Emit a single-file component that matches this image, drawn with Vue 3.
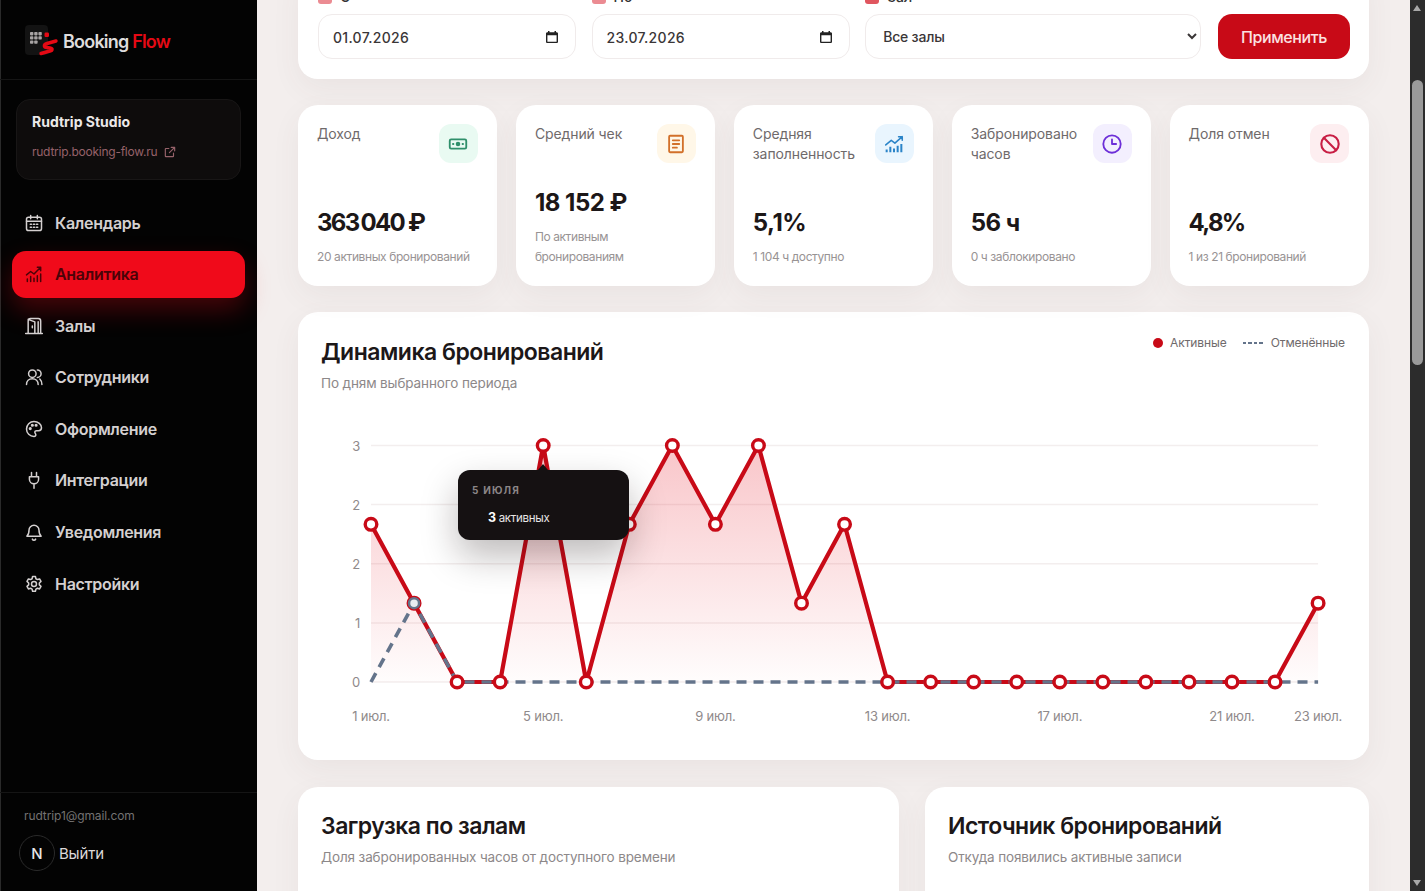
<script setup>
const navItems = [
  { label: 'Календарь', icon: 'calendar' },
  { label: 'Аналитика', icon: 'chart', active: true },
  { label: 'Залы', icon: 'door' },
  { label: 'Сотрудники', icon: 'users' },
  { label: 'Оформление', icon: 'palette' },
  { label: 'Интеграции', icon: 'plug' },
  { label: 'Уведомления', icon: 'bell' },
  { label: 'Настройки', icon: 'gear' },
]

const kpis = [
  { label: 'Доход', value: '363\u2009040 ₽', sub: '20 активных бронирований', icon: 'money', tone: 'green', tight: true },
  { label: 'Средний чек', value: '18 152 ₽', sub: 'По активным бронированиям', icon: 'receipt', tone: 'orange' },
  { label: 'Средняя заполненность', value: '5,1%', sub: '1 104 ч доступно', icon: 'growth', tone: 'blue' },
  { label: 'Забронировано часов', value: '56 ч', sub: '0 ч заблокировано', icon: 'clock', tone: 'violet' },
  { label: 'Доля отмен', value: '4,8%', sub: '1 из 21 бронирований', icon: 'ban', tone: 'rose', tight: true },
]

// значения по дням периода 1-23 июля
const active = [2, 1, 0, 0, 3, 0, 2, 3, 2, 3, 1, 2, 0, 0, 0, 0, 0, 0, 0, 0, 0, 0, 1]
const cancelled = [0, 1, 0, 0, 0, 0, 0, 0, 0, 0, 0, 0, 0, 0, 0, 0, 0, 0, 0, 0, 0, 0, 0]

const x0 = 50
const xStep = 43.05
const yTop = 20.5
const yBottom = 257
const px = (i) => x0 + i * xStep
const py = (v) => yBottom - (v / 3) * (yBottom - yTop)

const points = (arr) => arr.map((v, i) => `${px(i).toFixed(1)},${py(v).toFixed(1)}`).join(' ')
const activeLine = points(active)
const cancelledLine = points(cancelled)
const areaPath = `${px(0)},${yBottom} ${activeLine} ${px(22)},${yBottom}`

const yTicks = [
  { label: '3', y: yTop },
  { label: '2', y: yTop + 59.1 },
  { label: '2', y: yTop + 118.2 },
  { label: '1', y: yTop + 177.4 },
  { label: '0', y: yBottom },
]
const xTicks = [
  { label: '1 июл.', i: 0 },
  { label: '5 июл.', i: 4 },
  { label: '9 июл.', i: 8 },
  { label: '13 июл.', i: 12 },
  { label: '17 июл.', i: 16 },
  { label: '21 июл.', i: 20 },
  { label: '23 июл.', i: 22 },
]
</script>

<template>
  <div class="app">
    <aside class="sidebar">
      <div class="brand">
        <svg class="brand-mark" width="36" height="34" viewBox="0 0 36 34">
          <rect x="1" y="2" width="23" height="30" rx="4" fill="#131313" />
          <g fill="#a8a4a4">
            <rect x="6" y="9" width="3.400" height="3.400" rx="0.800" />
            <rect x="10.200" y="9" width="3.400" height="3.400" rx="0.800" />
            <rect x="14.400" y="9" width="3.400" height="3.400" rx="0.800" />
            <rect x="6" y="13.200" width="3.400" height="3.400" rx="0.800" />
            <rect x="10.200" y="13.200" width="3.400" height="3.400" rx="0.800" />
            <rect x="14.400" y="13.200" width="3.400" height="3.400" rx="0.800" />
            <rect x="6" y="17.400" width="3.400" height="3.400" rx="0.800" />
            <rect x="10.200" y="17.400" width="3.400" height="3.400" rx="0.800" />
          </g>
          <rect x="20.500" y="9.500" width="4.500" height="4.500" rx="1.200" fill="#e50914" />
          <path d="M32 18l-9 2.500c-4 1.200-3 3.800 0 4l3 .5c3 .5 2.500 2.500 0 3l-9 2.500" fill="none" stroke="#e50914" stroke-width="3.400" stroke-linecap="round" stroke-linejoin="round" />
        </svg>
        <span class="brand-name">Booking <em>Flow</em></span>
      </div>

      <div class="studio">
        <div class="studio-name">Rudtrip Studio</div>
        <div class="studio-link">
          rudtrip.booking-flow.ru
          <svg width="14" height="14" viewBox="0 0 24 24" fill="none" stroke="currentColor" stroke-width="2" stroke-linecap="round" stroke-linejoin="round">
            <path d="M14 4h6v6M20 4l-9 9M18 14v5a1 1 0 0 1-1 1H5a1 1 0 0 1-1-1V7a1 1 0 0 1 1-1h5" />
          </svg>
        </div>
      </div>

      <nav class="nav">
        <a v-for="item in navItems" :key="item.label" class="nav-item" :class="{ active: item.active }">
          <svg width="20" height="20" viewBox="0 0 24 24" fill="none" stroke="currentColor" stroke-width="1.800" stroke-linecap="round" stroke-linejoin="round">
            <template v-if="item.icon === 'calendar'">
              <rect x="3" y="5" width="18" height="16" rx="2.500" />
              <path d="M3 10h18M8 3v4M16 3v4M7.500 13.500h1.500M11.300 13.500h1.500M15 13.500h1.500M7.500 17h1.500M11.300 17h1.500M15 17h1.500" />
            </template>
            <template v-else-if="item.icon === 'chart'">
              <path d="M3 13l5-4 4 3 8-8M16 4h4v4" />
              <path d="M4 21v-3M8 21v-6M12 21v-4M16 21v-7M20 21v-9" />
            </template>
            <template v-else-if="item.icon === 'door'">
              <path d="M2 21h20M5 21V6a3 3 0 0 1 3-3h9a3 3 0 0 1 3 3v15M5 4l8 3v14M17 7v14M10 12v2" />
            </template>
            <template v-else-if="item.icon === 'users'">
              <circle cx="10" cy="8" r="4.500" />
              <path d="M3 21c0-4 3-7 7-7s7 3 7 7M16 3.500a4.500 4.500 0 0 1 0 9M19 14.500c1.500 1.500 2.500 3.800 2.500 6.500" />
            </template>
            <template v-else-if="item.icon === 'palette'">
              <path d="M12 3a9 9 0 1 0 0 18c1.500 0 2.200-1 2.200-2 0-1.500-1.200-2-1.200-3.200 0-1 .8-1.800 2-1.800h2.500c2 0 3.500-1.500 3.500-3.500C21 6.500 17 3 12 3z" />
              <circle cx="7.500" cy="11.500" r="1" fill="currentColor" />
              <circle cx="10" cy="7.500" r="1" fill="currentColor" />
              <circle cx="14.500" cy="7.500" r="1" fill="currentColor" />
            </template>
            <template v-else-if="item.icon === 'plug'">
              <path d="M9 3v5M15 3v5M6.500 8h11v3a5.500 5.500 0 0 1-11 0zM12 16.500V22" />
            </template>
            <template v-else-if="item.icon === 'bell'">
              <path d="M6 10a6 6 0 0 1 12 0c0 5 2.500 7 2.500 7h-17S6 15 6 10zM10 20.500a2.200 2.200 0 0 0 4 0" />
            </template>
            <template v-else>
              <circle cx="12" cy="12" r="3" />
              <path d="M10.300 3h3.400l.6 2.700 1.800 1 2.600-.8 1.700 3-2 1.900v2.200l2 1.900-1.700 3-2.600-.8-1.800 1-.6 2.700h-3.400l-.6-2.700-1.800-1-2.600.8-1.700-3 2-1.900v-2.200l-2-1.900 1.700-3 2.600.8 1.800-1z" />
            </template>
          </svg>
          <span>{{ item.label }}</span>
        </a>
      </nav>

      <div class="account">
        <div class="account-mail">rudtrip1@gmail.com</div>
        <div class="account-row">
          <span class="avatar">N</span>
          <span class="logout">Выйти</span>
        </div>
      </div>
    </aside>

    <main class="main">
      <section class="card filters">
        <div class="field">
          <label class="field-label"><i class="label-icon"></i>С</label>
          <div class="input">
            01.07.2026
            <svg width="14" height="14" viewBox="0 0 14 14"><path d="M3 1h1.500v1.200h5V1H11v1.200h.6c.8 0 1.400.6 1.400 1.300v8.200c0 .7-.6 1.300-1.400 1.300H2.400c-.8 0-1.400-.6-1.400-1.300V3.500c0-.7.600-1.300 1.400-1.300H3zM2.400 5.300v6.400h9.200V5.300z" fill="#222" /></svg>
          </div>
        </div>
        <div class="field">
          <label class="field-label"><i class="label-icon"></i>По</label>
          <div class="input">
            23.07.2026
            <svg width="14" height="14" viewBox="0 0 14 14"><path d="M3 1h1.500v1.200h5V1H11v1.200h.6c.8 0 1.400.6 1.400 1.300v8.200c0 .7-.6 1.300-1.400 1.300H2.400c-.8 0-1.400-.6-1.400-1.300V3.500c0-.7.600-1.300 1.400-1.300H3zM2.400 5.300v6.400h9.200V5.300z" fill="#222" /></svg>
          </div>
        </div>
        <div class="field field-wide">
          <label class="field-label"><i class="label-icon red"></i>Зал</label>
          <select class="select">
            <option>Все залы</option>
          </select>
        </div>
        <button class="apply" type="button">Применить</button>
      </section>

      <section class="kpis">
        <div v-for="kpi in kpis" :key="kpi.label" class="card kpi">
          <div class="kpi-top">
            <span class="kpi-label">{{ kpi.label }}</span>
            <span class="kpi-icon" :class="kpi.tone">
              <svg width="22" height="22" viewBox="0 0 24 24" fill="none" stroke="currentColor" stroke-width="2" stroke-linecap="round" stroke-linejoin="round">
                <template v-if="kpi.icon === 'money'">
                  <rect x="3" y="7" width="18" height="10" rx="1.500" />
                  <circle cx="12" cy="12" r="1.500" fill="currentColor" />
                  <path d="M6.500 12h.5M17 12h.5" />
                </template>
                <template v-else-if="kpi.icon === 'receipt'">
                  <rect x="4.500" y="3" width="15" height="18" rx="1" />
                  <path d="M8.500 8h7M8.500 12h7M8.500 16h4.500" />
                </template>
                <template v-else-if="kpi.icon === 'growth'">
                  <path d="M3 13l6-5 4 3 8-7M17 4h4v4" stroke-width="1.700" />
                  <path d="M4 21v-3M8 21v-6M12 21v-4M16 21v-7M20 21v-9" stroke-width="2.200" stroke-linecap="butt" />
                </template>
                <template v-else-if="kpi.icon === 'clock'">
                  <circle cx="12" cy="12" r="9.500" />
                  <path d="M12 7v5h4.500" />
                </template>
                <template v-else>
                  <circle cx="12" cy="12" r="9.500" stroke-width="2.300" />
                  <path d="M5.300 5.300l13.400 13.400" stroke-width="2.300" />
                </template>
              </svg>
            </span>
          </div>
          <div class="kpi-value" :class="{ tight: kpi.tight }">{{ kpi.value }}</div>
          <div class="kpi-sub">{{ kpi.sub }}</div>
        </div>
      </section>

      <section class="card chart-card">
        <div class="chart-head">
          <div>
            <h2>Динамика бронирований</h2>
            <p>По дням выбранного периода</p>
          </div>
          <div class="legend">
            <span class="legend-item"><i class="legend-dot"></i>Активные</span>
            <span class="legend-item"><i class="legend-dash"></i>Отменённые</span>
          </div>
        </div>

        <div class="chart">
          <svg width="1024" height="311" viewBox="0 0 1024 311">
            <defs>
              <linearGradient id="areaFill" x1="0" y1="0" x2="0" y2="1">
                <stop offset="0" stop-color="#e5101f" stop-opacity="0.24" />
                <stop offset="1" stop-color="#e5101f" stop-opacity="0.01" />
              </linearGradient>
            </defs>
            <g v-for="tick in yTicks" :key="tick.y">
              <line :x1="x0" :x2="px(22)" :y1="tick.y" :y2="tick.y" stroke="#f3eeee" stroke-width="1.500" />
              <text class="tick" x="39" :y="tick.y + 5" text-anchor="end">{{ tick.label }}</text>
            </g>
            <text v-for="tick in xTicks" :key="tick.label" class="tick" :x="px(tick.i)" y="296" text-anchor="middle">{{ tick.label }}</text>

            <polygon :points="areaPath" fill="url(#areaFill)" />
            <polyline :points="activeLine" fill="none" stroke="#c80a17" stroke-width="4.200" stroke-linejoin="round" />
            <polyline :points="cancelledLine" fill="none" stroke="#64748b" stroke-width="3.600" stroke-dasharray="10 7" />

            <circle v-for="(v, i) in active" :key="i" :cx="px(i)" :cy="py(v)" r="5.800" fill="#fff" stroke="#c80a17" stroke-width="3.400" />
            <circle :cx="px(1)" :cy="py(1)" r="5" fill="#e8ecf1" stroke="#64748b" stroke-width="2.500" />
          </svg>

          <div class="tooltip">
            <div class="tooltip-date">5 июля</div>
            <div class="tooltip-value"><b>3</b> активных</div>
          </div>
        </div>
      </section>

      <section class="bottom">
        <div class="card panel">
          <h2>Загрузка по залам</h2>
          <p>Доля забронированных часов от доступного времени</p>
        </div>
        <div class="card panel">
          <h2>Источник бронирований</h2>
          <p>Откуда появились активные записи</p>
        </div>
      </section>
    </main>

    <div class="scrollbar">
      <span class="arrow up"></span>
      <span class="thumb"></span>
      <span class="arrow down"></span>
    </div>
  </div>
</template>

<style>
html,
body {
  margin: 0;
  overflow: hidden;
}
</style>

<style scoped>
.app {
  display: flex;
  height: 891px;
  overflow: hidden;
  font-family: Inter, "Noto Sans", sans-serif;
  background: #f3eeed;
  color: #1a1516;
}

/* sidebar */
.sidebar {
  width: 257px;
  flex: none;
  display: flex;
  flex-direction: column;
  background: #030303;
  box-shadow: inset 1px 0 0 #2a2a2a;
  box-sizing: border-box;
}

.brand {
  height: 80px;
  flex: none;
  box-sizing: border-box;
  display: flex;
  align-items: center;
  gap: 3px;
  padding: 0 0 0 24px;
  border-bottom: 1px solid #151515;
}

.brand-name {
  padding-top: 3px;
  font-size: 18px;
  font-weight: 600;
  letter-spacing: -0.8px;
  color: #dedcdc;
}

.brand-name em {
  font-style: normal;
  color: #e50914;
}

.studio {
  margin: 19px 16px 0;
  height: 81px;
  box-sizing: border-box;
  padding: 12px 15px;
  background: #0e0c0c;
  border: 1px solid #181616;
  border-radius: 14px;
}

.studio-name {
  font-size: 14px;
  font-weight: 700;
  letter-spacing: 0;
  color: #ece9e9;
  line-height: 20px;
}

.studio-link {
  margin-top: 10px;
  display: flex;
  align-items: center;
  gap: 6px;
  font-size: 12px;
  letter-spacing: -0.25px;
  color: #96626a;
  line-height: 20px;
}

.nav {
  margin-top: 19px;
  display: flex;
  flex-direction: column;
  gap: 4.6px;
  padding: 0 12px;
}

.nav-item {
  height: 47px;
  display: flex;
  align-items: center;
  gap: 11px;
  padding: 0 12px;
  border-radius: 14px;
  font-size: 16px;
  font-weight: 600;
  letter-spacing: -0.3px;
  color: #d4d0d0;
}

.nav-item svg {
  flex: none;
}

.nav-item.active {
  background: #f00a1a;
  color: #4a0308;
  box-shadow: 0 12px 26px rgba(240, 10, 26, 0.28);
}

.account {
  margin-top: auto;
  height: 99px;
  box-sizing: border-box;
  padding: 14px 0 0 24px;
  border-top: 1px solid #151515;
}

.account-mail {
  font-size: 12px;
  letter-spacing: -0.1px;
  color: #747272;
  line-height: 18px;
}

.account-row {
  margin: 10px 0 0 -5px;
  display: flex;
  align-items: center;
  gap: 4px;
}

.avatar {
  width: 36px;
  height: 36px;
  border-radius: 50%;
  border: 1px solid #2a2a2a;
  box-sizing: border-box;
  display: flex;
  align-items: center;
  justify-content: center;
  font-size: 15px;
  font-weight: 500;
  color: #e6e6e6;
}

.logout {
  font-size: 15px;
  letter-spacing: -0.2px;
  color: #dcd9d9;
}

/* main */
.main {
  flex: 1;
  min-width: 0;
  padding: 0 41px;
  overflow: hidden;
}

.card {
  background: #fff;
  border-radius: 20px;
  box-shadow: 0 10px 30px rgba(90, 60, 60, 0.06);
}

.filters {
  margin-top: -32px;
  padding: 20px 19px 20px 20px;
  display: flex;
  align-items: flex-end;
  gap: 15.6px;
  height: 111px;
  box-sizing: border-box;
}

.field {
  flex: 0 0 258px;
  display: flex;
  flex-direction: column;
  gap: 8px;
}

.field-wide {
  flex: 1;
}

.field-label {
  display: flex;
  align-items: center;
  gap: 8px;
  font-size: 14px;
  line-height: 18px;
  font-weight: 500;
  color: #333;
}

.label-icon {
  width: 14px;
  height: 14px;
  border-radius: 3px;
  background: #eb8b92;
}

.label-icon.red {
  background: #e0565f;
}

.input,
.select {
  height: 45px;
  box-sizing: border-box;
  border: 1px solid #f0ebeb;
  border-radius: 14px;
  background: #fff;
  font-family: inherit;
  font-size: 14px;
  font-weight: 500;
  color: #3a3637;
}

.input {
  display: flex;
  align-items: center;
  justify-content: space-between;
  padding: 1px 16px 0 14px;
  letter-spacing: 0.3px;
}

.select {
  width: 100%;
  padding: 0 4px 0 13px;
  letter-spacing: -0.2px;
}

.apply {
  flex: none;
  width: 132px;
  height: 45px;
  margin-left: 1px;
  border: 0;
  border-radius: 14px;
  background: #c80a17;
  color: #fbe2e2;
  font-family: inherit;
  font-size: 16px;
  font-weight: 500;
  letter-spacing: -0.4px;
}

.kpis {
  margin-top: 26px;
  display: grid;
  grid-template-columns: repeat(5, 1fr);
  gap: 18.5px;
}

.kpi {
  height: 181px;
  box-sizing: border-box;
  padding: 19px 19.5px 20px 19px;
  display: flex;
  flex-direction: column;
}

.kpi-top {
  display: flex;
  justify-content: space-between;
  align-items: flex-start;
  gap: 8px;
  margin-bottom: auto;
}

.kpi-label {
  font-size: 14px;
  line-height: 20px;
  letter-spacing: -0.1px;
  color: #6f6a6b;
}

.kpi-icon {
  width: 39px;
  height: 39px;
  flex: none;
  border-radius: 12px;
  display: flex;
  align-items: center;
  justify-content: center;
}

.kpi-icon.green {
  background: #e9faf2;
  color: #2f8f6b;
}

.kpi-icon.orange {
  background: #fff7e8;
  color: #d2702a;
}

.kpi-icon.blue {
  background: #e9f5fe;
  color: #2b84c8;
}

.kpi-icon.violet {
  background: #f3effe;
  color: #6d2fd8;
}

.kpi-icon.rose {
  background: #fdeef0;
  color: #c81e44;
}

.kpi-value {
  font-size: 24px;
  line-height: 32px;
  font-weight: 700;
  letter-spacing: -0.5px;
  color: #1c1718;
}

.kpi-value.tight {
  letter-spacing: -1.7px;
}

.kpi-sub {
  margin-top: 8px;
  font-size: 12px;
  line-height: 19.5px;
  letter-spacing: -0.4px;
  color: #989394;
}

.chart-card {
  margin-top: 26px;
  height: 448px;
  box-sizing: border-box;
  padding: 24px 24px 0 23px;
}

.chart-head {
  display: flex;
  justify-content: space-between;
  align-items: flex-start;
  height: 89px;
}

h2 {
  margin: 0;
  font-size: 23px;
  line-height: 32px;
  font-weight: 600;
  letter-spacing: -0.5px;
  color: #1c1718;
}

p {
  margin: 0;
  margin-top: 4px;
  font-size: 13.5px;
  line-height: 22px;
  letter-spacing: -0.12px;
  color: #8d8889;
}

.legend {
  display: flex;
  gap: 16px;
  font-size: 12px;
  letter-spacing: -0.1px;
  color: #6f6a6b;
  line-height: 14px;
}

.legend-item {
  display: flex;
  align-items: center;
  gap: 7px;
}

.legend-dot {
  width: 10px;
  height: 10px;
  border-radius: 50%;
  background: #c80a17;
}

.legend-dash {
  width: 20px;
  height: 2px;
  margin-right: 1px;
  background: repeating-linear-gradient(90deg, #64748b 0 3.5px, transparent 3.5px 5.5px);
}

.chart {
  position: relative;
  height: 311px;
}

.chart svg {
  display: block;
}

.tick {
  font-size: 13px;
  letter-spacing: -0.2px;
  fill: #8f8a8b;
}

.tooltip {
  position: absolute;
  left: 137px;
  top: 45px;
  width: 171px;
  height: 70px;
  box-sizing: border-box;
  padding: 13px 14px;
  background: #151112;
  border-radius: 12px;
  box-shadow: 0 16px 36px rgba(20, 10, 10, 0.28);
  color: #fff;
}

.tooltip::before {
  content: "";
  position: absolute;
  left: 80px;
  top: -6px;
  border-left: 5px solid transparent;
  border-right: 5px solid transparent;
  border-bottom: 6px solid #151112;
}

.tooltip-date {
  font-size: 10px;
  line-height: 14px;
  font-weight: 700;
  text-transform: uppercase;
  letter-spacing: 1.2px;
  color: #8b8687;
}

.tooltip-value {
  margin: 13px 0 0 16px;
  font-size: 11.5px;
  line-height: 16px;
  letter-spacing: -0.3px;
  color: #e8e6e6;
}

.tooltip-value b {
  font-size: 12.5px;
  color: #fff;
}

.bottom {
  margin-top: 27px;
  display: grid;
  grid-template-columns: 601px 1fr;
  gap: 26px;
}

.panel {
  height: 400px;
  box-sizing: border-box;
  padding: 23px;
}

/* нарисованный скроллбар страницы */
.scrollbar {
  width: 15px;
  flex: none;
  box-sizing: border-box;
  position: relative;
  background: #2c2c2c;
}

.arrow {
  position: absolute;
  left: 3px;
  border-left: 4.5px solid transparent;
  border-right: 4.5px solid transparent;
}

.arrow.up {
  top: 5px;
  border-bottom: 6px solid #a8a8a8;
}

.arrow.down {
  bottom: 5px;
  border-top: 6px solid #a8a8a8;
}

.thumb {
  position: absolute;
  left: 2px;
  right: 2px;
  top: 80px;
  height: 285px;
  border-radius: 6px;
  background: #9a9a9a;
}
</style>
